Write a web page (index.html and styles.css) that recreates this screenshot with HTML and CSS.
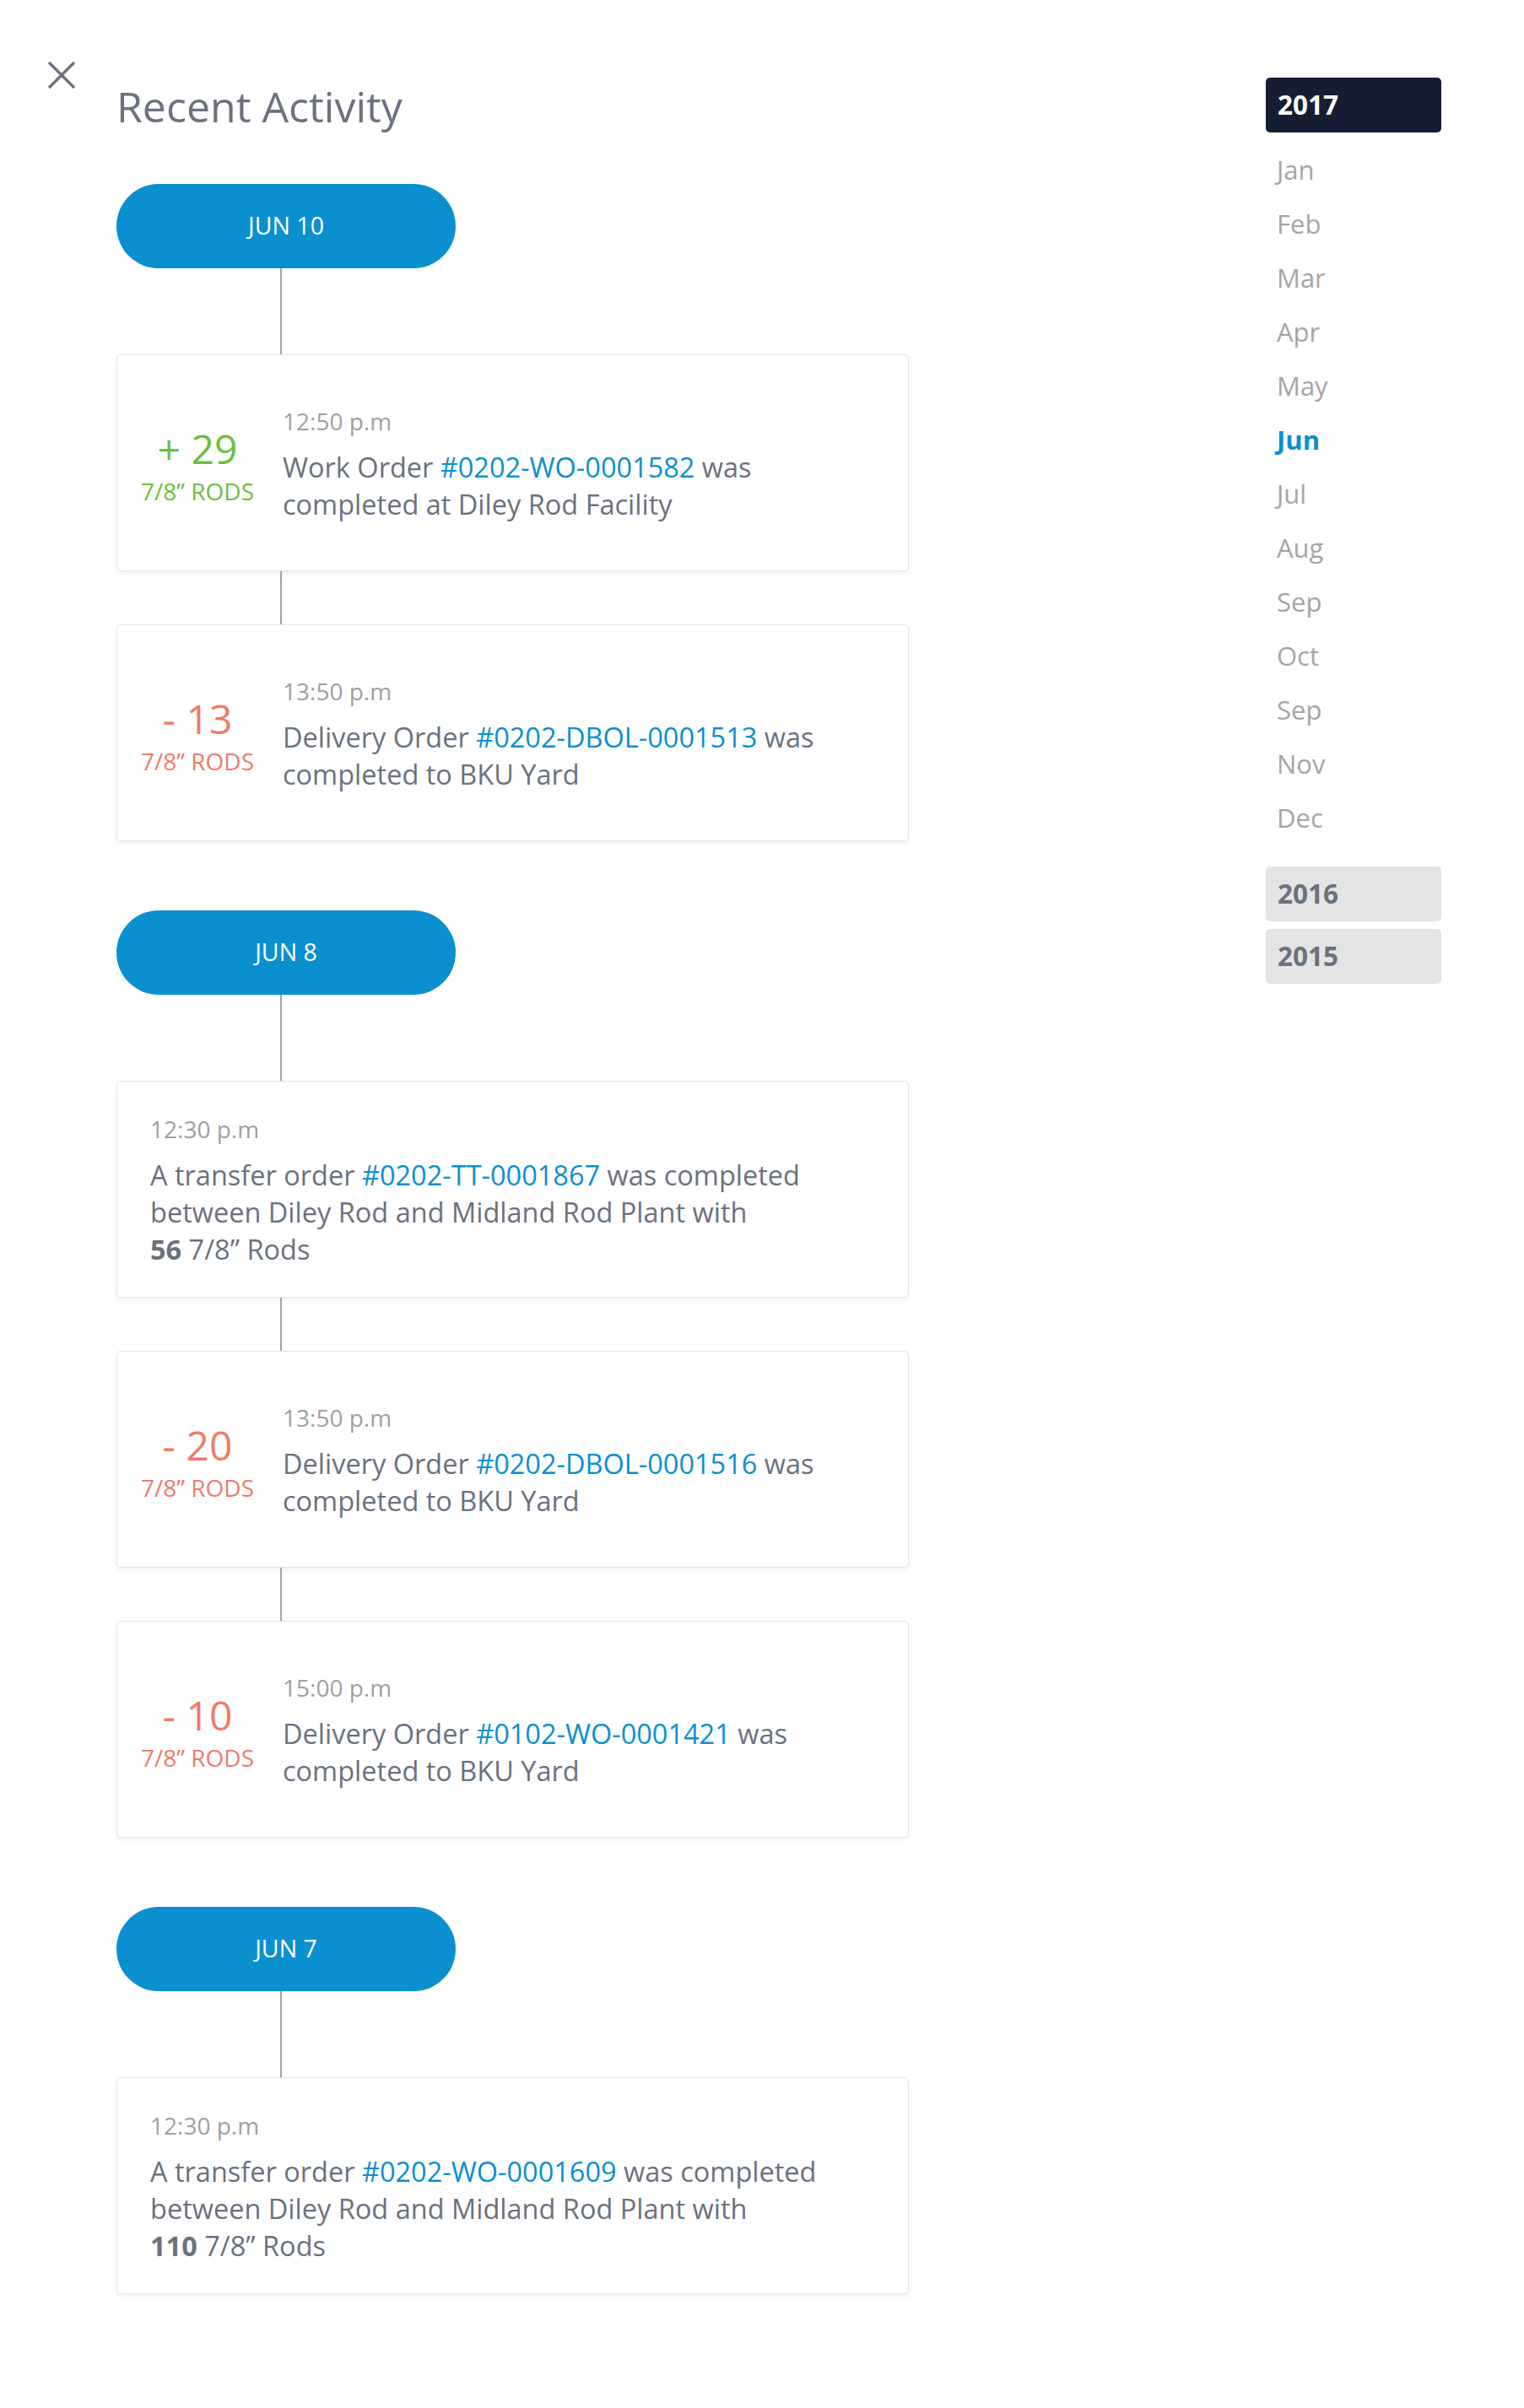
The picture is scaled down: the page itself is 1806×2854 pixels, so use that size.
FILE: index.html
```html
<!DOCTYPE html>
<html lang="en">
<head>
<meta charset="utf-8">
<title>Recent Activity</title>
<link rel="stylesheet" href="styles.css">
</head>
<body>
<div class="page">
  <div class="rail">
    <button class="close" aria-label="Close">
      <svg width="34" height="34" viewBox="0 0 34 34"><path d="M2 2 L32 32 M32 2 L2 32" stroke="#6b717e" stroke-width="3.2" fill="none"/></svg>
    </button>
  </div>

  <main class="main">
    <h1 class="title">Recent Activity</h1>

    <div class="day">
      <div class="pill">JUN 10</div>
      <div class="link-line"></div>
      <div class="card">
        <div class="qty plus"><div class="num">+ 29</div><div class="unit">7/8” RODS</div></div>
        <div class="info">
          <div class="time">12:50 p.m</div>
          <p class="desc">Work Order <a>#0202-WO-0001582</a> was<br>completed at Diley Rod Facility</p>
        </div>
      </div>
      <div class="link-line short"></div>
      <div class="card">
        <div class="qty minus"><div class="num">- 13</div><div class="unit">7/8” RODS</div></div>
        <div class="info">
          <div class="time">13:50 p.m</div>
          <p class="desc">Delivery Order <a>#0202-DBOL-0001513</a> was<br>completed to BKU Yard</p>
        </div>
      </div>
    </div>

    <div class="day">
      <div class="pill">JUN 8</div>
      <div class="link-line"></div>
      <div class="card plain">
        <div class="info">
          <div class="time">12:30 p.m</div>
          <p class="desc">A transfer order <a>#0202-TT-0001867</a> was completed<br>between Diley Rod and Midland Rod Plant with<br><b>56</b> 7/8” Rods</p>
        </div>
      </div>
      <div class="link-line short"></div>
      <div class="card">
        <div class="qty minus"><div class="num">- 20</div><div class="unit">7/8” RODS</div></div>
        <div class="info">
          <div class="time">13:50 p.m</div>
          <p class="desc">Delivery Order <a>#0202-DBOL-0001516</a> was<br>completed to BKU Yard</p>
        </div>
      </div>
      <div class="link-line short"></div>
      <div class="card">
        <div class="qty minus"><div class="num">- 10</div><div class="unit">7/8” RODS</div></div>
        <div class="info">
          <div class="time">15:00 p.m</div>
          <p class="desc">Delivery Order <a>#0102-WO-0001421</a> was<br>completed to BKU Yard</p>
        </div>
      </div>
    </div>

    <div class="day">
      <div class="pill">JUN 7</div>
      <div class="link-line"></div>
      <div class="card plain">
        <div class="info">
          <div class="time">12:30 p.m</div>
          <p class="desc">A transfer order <a>#0202-WO-0001609</a> was completed<br>between Diley Rod and Midland Rod Plant with<br><b>110</b> 7/8” Rods</p>
        </div>
      </div>
    </div>
  </main>

  <aside class="years">
    <div class="year active">2017</div>
    <ul class="months">
      <li>Jan</li>
      <li>Feb</li>
      <li>Mar</li>
      <li>Apr</li>
      <li>May</li>
      <li class="current">Jun</li>
      <li>Jul</li>
      <li>Aug</li>
      <li>Sep</li>
      <li>Oct</li>
      <li>Sep</li>
      <li>Nov</li>
      <li>Dec</li>
    </ul>
    <div class="year other first">2016</div>
    <div class="year other">2015</div>
  </aside>
</div>
</body>
</html>
```

FILE: styles.css
```css
* { box-sizing: border-box; }

html, body {
  margin: 0;
  padding: 0;
  background: #ffffff;
}

body {
  font-family: "Open Sans", "Noto Sans", "Liberation Sans", sans-serif;
  color: #6b717e;
  min-height: 2854px;
}

.page {
  display: flex;
  align-items: flex-start;
}

.rail {
  width: 138px;
  flex: none;
  padding: 72px 0 0 56px;
}

.close {
  display: block;
  width: 34px;
  height: 34px;
  padding: 0;
  margin: 0;
  border: 0;
  background: none;
  cursor: pointer;
}
.close svg { display: block; }

.main {
  width: 939px;
  flex: none;
  padding-top: 97px;
}

.title {
  margin: 0 0 63px;
  font-size: 50px;
  line-height: 58px;
  font-weight: 400;
  color: #6b717e;
}

.day {
  display: flex;
  flex-direction: column;
  align-items: flex-start;
  margin-bottom: 82px;
}

.pill {
  width: 402px;
  height: 100px;
  padding-bottom: 3px;
  border-radius: 50px;
  background: #0b90cf;
  color: #ffffff;
  font-size: 28.5px;
  display: flex;
  align-items: center;
  justify-content: center;
}

.link-line {
  width: 2px;
  height: 102px;
  margin-left: 194px;
  background: #a3a3a3;
}
.link-line.short { height: 63px; }

.card {
  width: 939px;
  height: 257px;
  border: 1px solid #e4e4e4;
  border-radius: 5px;
  box-shadow: 0 3px 6px rgba(0, 0, 0, 0.06);
  background: #ffffff;
  display: flex;
  align-items: center;
}
.card.plain { padding-left: 39px; }

.qty {
  width: 196px;
  flex: none;
  padding-right: 6px;
  padding-top: 8px;
  text-align: center;
}
.qty .num {
  font-size: 48px;
  line-height: 50px;
}
.qty .unit {
  font-size: 28px;
  line-height: 32px;
  margin-top: 9px;
}
.qty.plus { color: #6cbf3e; }
.qty.minus { color: #f07b68; }

.info { padding-top: 5px; }

.time {
  font-size: 28px;
  line-height: 34px;
  color: #a0a0a0;
}

.desc {
  margin: 16px 0 0;
  font-size: 32.5px;
  line-height: 44px;
  color: #6b717e;
}
.desc a {
  color: #0b8fd0;
  text-decoration: none;
}
.desc b { font-weight: 700; }

.years {
  width: 208px;
  flex: none;
  margin-left: 423px;
  padding-top: 92px;
}

.year {
  height: 65px;
  line-height: 64px;
  padding-left: 14px;
  border-radius: 5px;
  font-size: 31.5px;
  font-weight: 700;
}
.year.active {
  background: #161e33;
  color: #ffffff;
}
.year.other {
  background: #e4e4e4;
  color: #6b717e;
  margin-top: 9px;
}
.year.other.first { margin-top: 26px; }

.months {
  list-style: none;
  margin: 12px 0 0;
  padding: 0 0 0 13px;
}
.months li {
  font-size: 31px;
  line-height: 64px;
  color: #a5a5a5;
}
.months li.current {
  color: #0b8fd0;
  font-weight: 700;
}
```
